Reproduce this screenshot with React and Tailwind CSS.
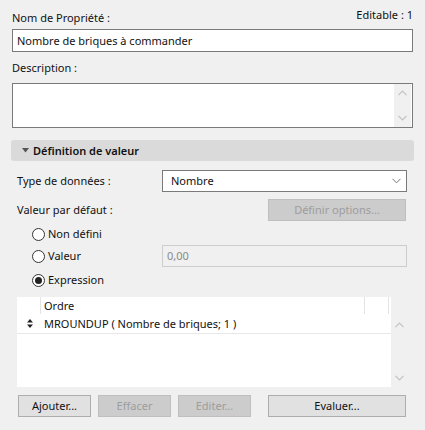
import React from "react";

const Chevron = ({ dir = "down", className = "", stroke = 1.2 }) => (
  <svg width="9" height="6" viewBox="0 0 9 6" className={className}>
    {dir === "down" ? (
      <path d="M0.5 0.8 L4.5 4.8 L8.5 0.8" fill="none" stroke="currentColor" strokeWidth={stroke} />
    ) : (
      <path d="M0.5 5.2 L4.5 1.2 L8.5 5.2" fill="none" stroke="currentColor" strokeWidth={stroke} />
    )}
  </svg>
);

const Radio = ({ checked, label }) => (
  <div className="flex items-center gap-[3px]">
    <span className="w-[13px] h-[13px] rounded-full border border-[#333] bg-white flex items-center justify-center">
      {checked && <span className="w-[7px] h-[7px] rounded-full bg-[#222]" />}
    </span>
    <span>{label}</span>
  </div>
);

const Button = ({ children, disabled, className = "" }) => (
  <button
    className={`h-[22px] border text-[11px] ${
      disabled
        ? "bg-[#cccccc] border-[#bfbfbf] text-[#9d9d9d]"
        : "bg-[#e1e1e1] border-[#adadad] text-[#111]"
    } ${className}`}
  >
    {children}
  </button>
);

export default function App() {
  return (
    <div
      className="w-[425px] h-[430px] bg-[#f0f0f0] text-[11px] text-[#111] leading-[16px] overflow-hidden"
      style={{ fontFamily: '"Noto Sans", "Open Sans", sans-serif' }}
    >
      {/* Propriété */}
      <div className="px-[12px]">
        <div className="h-[29px] flex justify-between items-end pb-[3px]">
          <span>Nom de Propriété :</span>
          <span className="self-start mt-[7px]">Editable : 1</span>
        </div>
        <div className="h-[23px] border border-[#7a7a7a] bg-white flex items-center pl-[4px]">
          Nombre de briques à commander
        </div>
        <div className="h-[31px] flex items-center">Description :</div>
        <div className="h-[45px] border border-[#7a7a7a] bg-white flex justify-end pr-[1px]">
          <div className="w-[17px] bg-[#f0f0f0] flex flex-col items-center justify-between py-[6px] text-[#c2c2c2]">
            <Chevron dir="up" />
            <Chevron dir="down" />
          </div>
        </div>
      </div>

      {/* Définition de valeur */}
      <div className="mx-[11px] mt-[12px] h-[21px] bg-[#dadada] rounded-[3px] flex items-center pl-[11px] gap-[4px] font-semibold">
        <svg width="7" height="5" viewBox="0 0 7 5">
          <path d="M0 0 L7 0 L3.5 4.5 Z" fill="#555" />
        </svg>
        <span>Définition de valeur</span>
      </div>

      <div className="pl-[17px] pr-[18px]">
        <div className="mt-[9px] h-[22px] flex items-center justify-between">
          <span>Type de données :</span>
          <div className="w-[245px] h-[22px] border border-[#7a7a7a] bg-white flex items-center justify-between pl-[8px] pr-[5px]">
            <span>Nombre</span>
            <Chevron className="text-[#666]" stroke={0.9} />
          </div>
        </div>
        <div className="mt-[7px] h-[22px] flex items-center justify-between">
          <span>Valeur par défaut :</span>
          <Button disabled className="w-[138px] mr-[1px]">
            Définir options...
          </Button>
        </div>
        <div className="pl-[15px]">
          <div className="mt-[2px] h-[22px] flex items-center">
            <Radio label="Non défini" />
          </div>
          <div className="h-[22px] flex items-center justify-between">
            <Radio label="Valeur" />
            <div className="w-[245px] h-[22px] border border-[#cdcdcd] bg-[#f0f0f0] flex items-center pl-[4px] text-[#8a8a8a]">
              0,00
            </div>
          </div>
          <div className="mt-[2px] h-[22px] flex items-center">
            <Radio checked label="Expression" />
          </div>
        </div>

        {/* Expression list */}
        <div className="mt-[6px] flex">
          <div className="w-[374px] h-[90px] bg-white flex flex-col">
            <div className="h-[17px] flex w-[372px]">
              <div className="w-[24px] border-r border-[#e3e3e3]" />
              <div className="flex-1 pl-[3px] flex items-center border-r border-[#e3e3e3]">Ordre</div>
              <div className="w-[24px] border-r border-[#e3e3e3]" />
            </div>
            <div className="h-[20px] flex items-center border-b border-[#e8e8e8]">
              <div className="w-[24px] flex justify-center pl-[1px]">
                <svg width="6" height="9" viewBox="0 0 6 9">
                  <path d="M0 3.5 L3 0 L6 3.5 Z M0 5.5 L3 9 L6 5.5 Z" fill="#222" />
                </svg>
              </div>
              <span className="pl-[3px]">MROUNDUP ( Nombre de briques; 1 )</span>
            </div>
          </div>
          <div className="flex-1 flex flex-col items-center justify-between pt-[25px] pb-[6px] text-[#c2c2c2]">
            <Chevron dir="up" />
            <Chevron dir="down" />
          </div>
        </div>

        {/* Buttons */}
        <div className="mt-[8px] flex pl-[1px]">
          <Button className="w-[73px]">Ajouter...</Button>
          <Button disabled className="w-[73px] ml-[7px]">
            Effacer
          </Button>
          <Button disabled className="w-[73px] ml-[7px]">
            Editer...
          </Button>
          <Button className="w-[138px] ml-auto mr-[1px]">Evaluer...</Button>
        </div>
      </div>
    </div>
  );
}
